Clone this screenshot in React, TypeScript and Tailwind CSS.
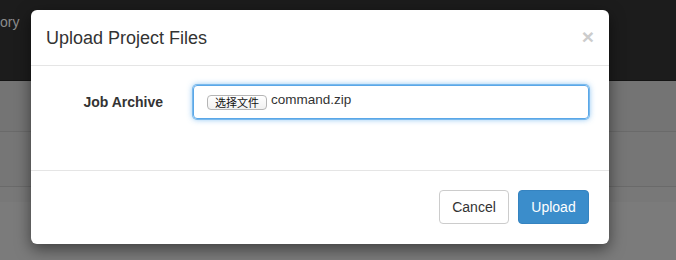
export default function App() {
  return (
    <div className="relative h-[260px] w-[676px] overflow-hidden font-['Liberation_Sans',Arial,sans-serif]">
      {/* page behind the backdrop */}
      <div className="flex h-full flex-col">
        <div className="flex h-[81px] items-start border-b border-[#141414] bg-[#1c1c1c]">
          <span className="mt-[12px] text-[14px] text-[#8c8c8c]">ory</span>
        </div>
        <div className="h-[51px] border-b border-[#6a6a6a] bg-[#747474]" />
        <div className="h-[55px] border-b border-[#6a6a6a] bg-[#767676]" />
        <div className="h-[15px] bg-[#787878]" />
        <div className="flex-1 bg-[#7b7b7b]" />
      </div>

      {/* modal */}
      <div className="absolute left-[31px] top-[10px] flex h-[234px] w-[578px] flex-col rounded-[6px] bg-white shadow-[0_5px_15px_rgba(0,0,0,0.5)]">
        <div className="flex h-[56px] shrink-0 items-center justify-between border-b border-[#e5e5e5] px-[15px]">
          <h4 className="text-[18px] leading-none text-[#333]">Upload Project Files</h4>
          <button type="button" className="mb-[2px] text-[21px] font-bold leading-none text-[#cccccc]">
            ×
          </button>
        </div>

        <div className="h-[104px] shrink-0 pt-[19px]">
          <div className="flex items-center gap-[30px]">
            <label className="w-[132px] text-right text-[14px] font-bold text-[#333]">Job Archive</label>
            <div className="flex h-[34px] w-[396px] items-center rounded-[4px] border border-[#5aa7e8] pl-[13px] shadow-[0_0_0_1px_rgba(102,175,233,0.8),0_0_6px_rgba(82,168,236,0.8)]">
              <span className="flex h-[15px] w-[60px] items-center justify-center rounded-[4px] border border-[#b5b5b5] bg-gradient-to-b from-white to-[#f1f1f1] text-[11px] leading-none text-[#111] font-['Noto_Sans_CJK_SC',sans-serif]">
                选择文件
              </span>
              <span className="ml-[4px] mb-[3px] text-[13.5px] text-[#333]">command.zip</span>
            </div>
          </div>
        </div>

        <div className="flex flex-1 items-start justify-end gap-[9px] border-t border-[#e5e5e5] pr-[20px] pt-[19px]">
          <button type="button" className="h-[34px] w-[70px] rounded-[4px] border border-[#cccccc] bg-white text-[14px] text-[#333]">
            Cancel
          </button>
          <button type="button" className="h-[34px] w-[71px] rounded-[4px] border border-[#3583c0] bg-[#3b8dcb] text-[14px] text-white">
            Upload
          </button>
        </div>
      </div>
    </div>
  );
}
